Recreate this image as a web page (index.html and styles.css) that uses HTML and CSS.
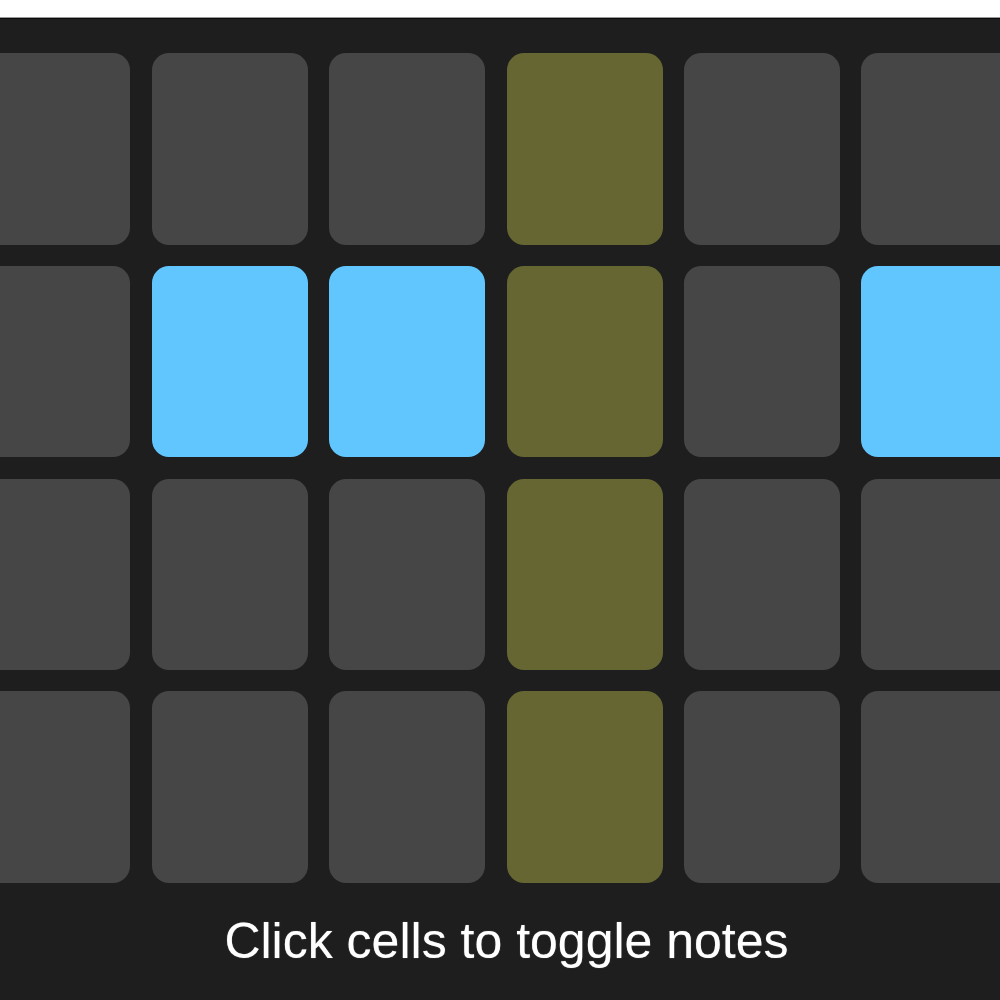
FILE: index.html
```html
<!DOCTYPE html>
<html>
<head>
<meta charset="utf-8">
<link rel="stylesheet" href="styles.css">
</head>
<body>
<div class="topbar"></div>
<main class="app">
  <div class="grid-wrap">
    <div class="grid">
      <div class="cell"></div><div class="cell"></div><div class="cell"></div><div class="cell play"></div><div class="cell"></div><div class="cell"></div>
      <div class="cell"></div><div class="cell on"></div><div class="cell on"></div><div class="cell play"></div><div class="cell"></div><div class="cell on"></div>
      <div class="cell"></div><div class="cell"></div><div class="cell"></div><div class="cell play"></div><div class="cell"></div><div class="cell"></div>
      <div class="cell"></div><div class="cell"></div><div class="cell"></div><div class="cell play"></div><div class="cell"></div><div class="cell"></div>
    </div>
  </div>
  <p class="hint">Click cells to toggle notes</p>
</main>
</body>
</html>
```

FILE: styles.css
```css
html, body {
  margin: 0;
  padding: 0;
  width: 1000px;
  height: 1000px;
  overflow: hidden;
  background: #1e1e1e;
}
.topbar {
  height: 17px;
  background: #ffffff;
  border-bottom: 1px solid #9a9a9a;
}
.app {
  border-top: 1px solid #0a0a0a;
  background: #1e1e1e;
  height: 981px;
  overflow: hidden;
}
.grid-wrap {
  padding-top: 34px;
  overflow: hidden;
}
.grid {
  display: grid;
  grid-template-columns: repeat(6, 156px);
  grid-template-rows: repeat(4, 191.5px);
  column-gap: 21.4px;
  row-gap: 21.3px;
  margin-left: -25.6px;
  width: 1100px;
}
.cell {
  background: #464646;
  border-radius: 17px;
}
.cell.on {
  background: #62c6fe;
}
.cell.play {
  background: #666633;
}
.hint {
  margin: 33px 0 0 0;
  padding-left: 13px;
  text-align: center;
  font-family: "Liberation Sans", Arial, sans-serif;
  font-size: 50px;
  line-height: 50px;
  color: #ffffff;
  text-shadow: 0 0 1px rgba(255, 255, 255, 0.5);
}
```
